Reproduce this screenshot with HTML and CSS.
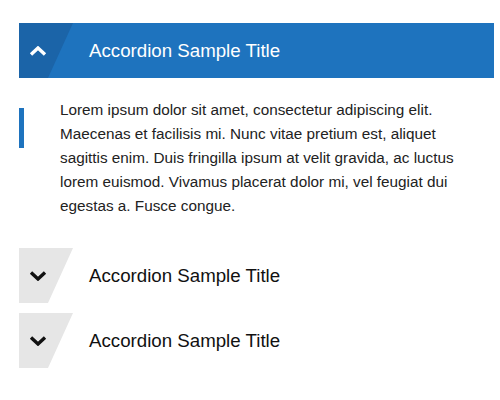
FILE: index.html
```html
<!DOCTYPE html>
<html>
<head>
<meta charset="utf-8">
<link rel="stylesheet" href="styles.css">
</head>
<body>
<div class="accordion">
  <div class="item open">
    <div class="head">
      <span class="icon"><svg width="18" height="10" viewBox="0 0 18 10"><polyline points="2,8.5 9,2 16,8.5" fill="none" stroke="#fff" stroke-width="3.4" stroke-linejoin="miter"/></svg></span>
      <span class="title">Accordion Sample Title</span>
    </div>
    <div class="body">
      <span class="mark"></span>
      <p class="text">Lorem ipsum dolor sit amet, consectetur adipiscing elit. Maecenas et facilisis mi. Nunc vitae pretium est, aliquet sagittis enim. Duis fringilla ipsum at velit gravida, ac luctus lorem euismod. Vivamus placerat dolor mi, vel feugiat dui egestas a. Fusce congue.</p>
    </div>
  </div>
  <div class="item">
    <div class="head">
      <span class="icon"><svg width="18" height="10" viewBox="0 0 18 10"><polyline points="2,1.5 9,8 16,1.5" fill="none" stroke="#111" stroke-width="3.4" stroke-linejoin="miter"/></svg></span>
      <span class="title">Accordion Sample Title</span>
    </div>
  </div>
  <div class="item">
    <div class="head">
      <span class="icon"><svg width="18" height="10" viewBox="0 0 18 10"><polyline points="2,1.5 9,8 16,1.5" fill="none" stroke="#111" stroke-width="3.4" stroke-linejoin="miter"/></svg></span>
      <span class="title">Accordion Sample Title</span>
    </div>
  </div>
</div>
</body>
</html>
```
FILE: styles.css
```css
html, body {
  margin: 0;
  padding: 0;
  background: #fff;
}
body {
  font-family: "Liberation Sans", Arial, sans-serif;
}
.accordion {
  margin: 23px 6px 0 19px;
}
.item {
  margin-bottom: 10px;
}
.head {
  display: flex;
  align-items: center;
  height: 55px;
}
.item.open .head {
  background: #1e73be;
}
.icon {
  flex: none;
  width: 54px;
  height: 55px;
  box-sizing: border-box;
  padding-left: 10px;
  display: flex;
  align-items: center;
  background: #e6e6e6;
  clip-path: polygon(0 0, 54px 0, 29px 100%, 0 100%);
}
.icon svg {
  display: block;
}
.item.open .icon {
  background: #1b64a8;
}
.title {
  margin-left: 16px;
  font-size: 18.7px;
  color: #111;
}
.item.open .title {
  color: #fff;
}
.body {
  display: flex;
  align-items: flex-start;
  padding: 20px 0 20px;
}
.mark {
  flex: none;
  width: 5px;
  height: 40px;
  margin-top: 10px;
  background: #1e73be;
}
.text {
  margin: 0 10px 0 36px;
  font-size: 15.3px;
  line-height: 24px;
  color: #222;
}
```
